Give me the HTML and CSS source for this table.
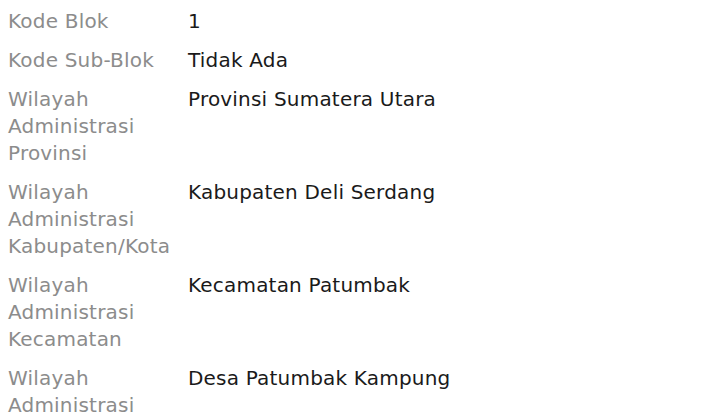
FILE: index.html
```html
<!DOCTYPE html>
<html>
<head>
<meta charset="utf-8">
<link rel="stylesheet" href="styles.css">
</head>
<body>
<div class="list">
  <div class="row"><div class="label">Kode Blok</div><div class="value">1</div></div>
  <div class="row"><div class="label">Kode Sub-Blok</div><div class="value">Tidak Ada</div></div>
  <div class="row"><div class="label">Wilayah Administrasi Provinsi</div><div class="value">Provinsi Sumatera Utara</div></div>
  <div class="row"><div class="label">Wilayah Administrasi Kabupaten/Kota</div><div class="value">Kabupaten Deli Serdang</div></div>
  <div class="row"><div class="label">Wilayah Administrasi Kecamatan</div><div class="value">Kecamatan Patumbak</div></div>
  <div class="row"><div class="label">Wilayah Administrasi Desa/Kelurahan</div><div class="value">Desa Patumbak Kampung</div></div>
</div>
</body>
</html>
```
FILE: styles.css
```css
html, body { margin: 0; background: #fff; }
body { padding: 8px 8px; font-family: "DejaVu Sans", Verdana, sans-serif; font-size: 20px; line-height: 27px; letter-spacing: 0.2px; }
.list { display: flex; flex-direction: column; gap: 12px; }
.row { display: grid; grid-template-columns: 180px 1fr; }
.label { color: #8c8c8c; width: 172px; }
.value { color: #1a1a1a; }
```
